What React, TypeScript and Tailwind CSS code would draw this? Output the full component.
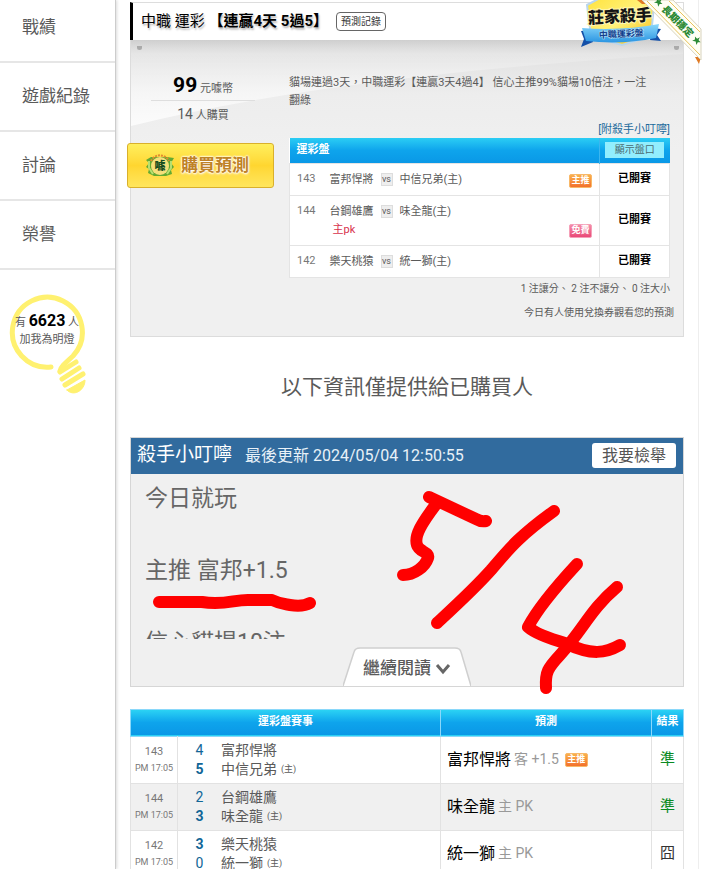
import React from "react";

type Tag = "main" | "free";

const menu = ["戰績", "遊戲紀錄", "討論", "榮譽"];

const games: { id: number; away: string; home: string; note?: string; tag?: Tag }[] = [
  { id: 143, away: "富邦悍將", home: "中信兄弟(主)", tag: "main" },
  { id: 144, away: "台鋼雄鷹", home: "味全龍(主)", note: "主pk", tag: "free" },
  { id: 142, away: "樂天桃猿", home: "統一獅(主)" },
];

const results = [
  { id: 143, away: "富邦悍將", home: "中信兄弟", a: 4, h: 5, pick: "富邦悍將", side: "客 +1.5", main: true, hit: true },
  { id: 144, away: "台鋼雄鷹", home: "味全龍", a: 2, h: 3, pick: "味全龍", side: "主 PK", main: false, hit: true },
  { id: 142, away: "樂天桃猿", home: "統一獅", a: 3, h: 0, pick: "統一獅", side: "主 PK", main: false, hit: false },
];

function PickTag({ kind }: { kind: Tag }) {
  const tone =
    kind === "main"
      ? "border-[#f8b868] bg-linear-to-b from-[#f9b04c] to-[#f2702c]"
      : "border-[#f5a0b8] bg-linear-to-b from-[#f48aa8] to-[#e94878]";
  return (
    <span
      className={`inline-flex h-[14px] w-[23px] shrink-0 items-center justify-center rounded-xs border text-[9px] leading-none font-bold text-white ${tone}`}
    >
      {kind === "main" ? "主推" : "免費"}
    </span>
  );
}

function Bulb() {
  return (
    <svg viewBox="0 0 84 104" className="absolute top-0 -left-[2px] h-[104px] w-[84px]" fill="none" stroke="#fff170" strokeLinecap="round" aria-hidden="true">
      <path d="M48 73 A35 35 0 1 1 70 62 C61 70 58 73 57 77" strokeWidth="5" />
      <path d="M57 78 L73 68" strokeWidth="5" />
      <path d="M59 85 L76 74 M62 91 L80 80" strokeWidth="5" />
      <path d="M64 96 L82 86 C82 97 70 103 64 96 Z" fill="#fff170" strokeWidth="1" />
    </svg>
  );
}

function Sidebar() {
  return (
    <aside className="w-[116px] shrink-0 border-r border-[#cccccc] bg-white shadow-[1px_0_3px_rgba(0,0,0,0.15)]">
      <nav>
        {menu.map((m) => (
          <a
            key={m}
            href="#"
            className="flex h-[69px] items-center border-b-2 border-[#e6e6e6] pl-[22px] text-[17px] first:h-[63px] first:pb-[6px]"
          >
            {m}
          </a>
        ))}
      </nav>
      <div className="relative mt-[24px] ml-[5px] h-[104px] w-[84px] pt-[18px] text-center text-[11px] leading-[17px]">
        <Bulb />
        <p className="relative whitespace-nowrap">
          有 <b className="text-[16px] font-bold text-black">6623</b> 人
        </p>
        <p className="relative">加我為明燈</p>
      </div>
    </aside>
  );
}

function Medal() {
  return (
    <svg viewBox="0 0 124 64" className="absolute -top-[2px] -right-[18px] h-[64px] w-[124px]" aria-hidden="true">
      <defs>
        <linearGradient id="gold" x1="0" y1="0" x2="1" y2="1">
          <stop offset="0" stopColor="#ffe23c" />
          <stop offset="0.5" stopColor="#fff27a" />
          <stop offset="1" stopColor="#f5b60c" />
        </linearGradient>
        <linearGradient id="ribbon" x1="0" y1="0" x2="0" y2="1">
          <stop offset="0" stopColor="#8ad8fb" />
          <stop offset="1" stopColor="#2b95e2" />
        </linearGradient>
      </defs>
      <path d="M3 31 L12 30 L15 42 L3 47 L6 39 Z M83 29 L74 28 L72 40 L83 41 L79 35 Z" fill="#1450a8" />
      <path d="M9 5 L24 -3 H58 L76 5 L73 36 L44 45 L13 36 Z" fill="url(#gold)" stroke="#b9d6ee" strokeWidth="2" />
      <path d="M4 28 Q44 31 81 24 L78 38 Q44 45 8 41 Z" fill="url(#ribbon)" />
      <g transform="rotate(-3 42 20)">
        <text x="10" y="22" fontSize="16" fontWeight="900" fill="#151515" stroke="#fff6b0" strokeWidth="2" paintOrder="stroke">莊家殺手</text>
        <text x="20" y="37" fontSize="9" fontWeight="700" fill="#143f8c" stroke="#b9e6fb" strokeWidth="1" paintOrder="stroke">中職運彩盤</text>
      </g>
      <path d="M59 0 L64 4 L73 4 L68 0 Z M117 57 L123 57 L121 64 Z" fill="#e07a24" />
      <path d="M64 0 H95 L123 29 V60 Z" fill="#fffef4" stroke="#d8d3be" strokeWidth="1" />
      <path d="M69 1 L122 55 M91 1 L122 32" stroke="#e9c25a" strokeWidth="1" />
      <g transform="translate(100 21) rotate(45)" fill="#2c8a34">
        <text x="-20" y="4" fontSize="10" fontWeight="900">長期穩定</text>
        <path d="M-27 -4 L-26 -1 L-23 -1 L-25 1 L-24 4 L-27 2 L-30 4 L-29 1 L-31 -1 L-28 -1 Z" />
        <path d="M27 -4 L28 -1 L31 -1 L29 1 L30 4 L27 2 L24 4 L25 1 L23 -1 L26 -1 Z" />
      </g>
    </svg>
  );
}

function BuyButton() {
  return (
    <button className="-ml-[4px] flex h-[45px] w-[147px] items-center gap-[6px] rounded-[3px] border border-[#d9b02c] bg-linear-to-b from-[#ffef5c] via-[#ffd630] to-[#ffe65c] pl-[17px] text-[17px] font-bold text-[#bf8226]">
      <svg viewBox="0 0 30 24" className="h-[24px] w-[30px]" aria-hidden="true">
        <path d="M6 3 L1 6 L4 9 L1 13 L4 15 L3 19 L9 22 H21 L27 20 L26 16 L29 13 L26 9 L29 4 L22 3 Z" fill="#63aa32" />
        <path d="M4 7 L4 14 L8 20 M26 7 L26 14 L22 20" stroke="#b7df70" strokeWidth="2" fill="none" />
        <circle cx="15" cy="12" r="9" fill="#f5df7a" />
        <path d="M6 7 A10 10 0 0 1 24 7" stroke="#e48a30" strokeWidth="2" strokeDasharray="2 1" fill="none" />
        <text x="15" y="16" textAnchor="middle" fontSize="11" fontWeight="900" fill="#174d20">噱</text>
      </svg>
      <span className="[text-shadow:0_0_2px_#fff,0_0_2px_#fff,0_0_2px_#fff,0_1px_3px_#fff]">購買預測</span>
    </button>
  );
}

function GamesTable() {
  return (
    <table className="w-full table-fixed border-collapse bg-white text-[11px]">
      <colgroup>
        <col className="w-[40px]" />
        <col />
        <col className="w-[70px]" />
      </colgroup>
      <thead>
        <tr className="h-[25px] bg-linear-to-b from-[#2bcdf4] via-[#0ea4ec] to-[#0a98e6] text-white">
          <th colSpan={2} className="pl-[7px] text-left font-bold">運彩盤</th>
          <th className="border-l border-[#3cb6ef] p-0">
            <button className="h-[16px] w-[59px] bg-[#92eefe] align-middle text-[10px] leading-[16px] font-normal text-[#4a6a70]">顯示盤口</button>
          </th>
        </tr>
      </thead>
      <tbody>
        {games.map((g) => (
          <tr key={g.id} className="border border-[#e4e4e4]">
            <td className="py-[7px] pl-[7px] align-top leading-[16px] text-[#777]">{g.id}</td>
            <td className="py-[7px] pr-[7px] align-top">
              <div className="flex items-end justify-between">
                <div className="leading-[17px] whitespace-nowrap">
                  <div className="flex items-center gap-[7px]">
                    {g.away}
                    <span className="flex h-[13px] w-[12px] items-center justify-center border border-[#ddd] bg-[#eee] text-[9px] leading-none">vs</span>
                    {g.home}
                  </div>
                  {g.note && <div className="pt-px pl-[3px] text-[#d8304c]">{g.note}</div>}
                </div>
                {g.tag && <PickTag kind={g.tag} />}
              </div>
            </td>
            <td className="border-l border-[#e4e4e4] text-center font-bold text-black">已開賽</td>
          </tr>
        ))}
      </tbody>
    </table>
  );
}

function Offer() {
  return (
    <section className="relative">
      <header className="flex h-[38px] items-center gap-[8px] border-t border-r border-l-3 border-t-[#ddd] border-r-[#ddd] border-l-black bg-white pl-[8px] text-black">
        <h1 className="text-[15px] font-normal whitespace-pre [text-shadow:1px_2px_2px_rgba(0,0,0,0.3)]">
          中職 運彩 <b className="font-bold">【連贏4天 5過5】</b>
        </h1>
        <button className="h-[19px] rounded-[4px] border border-[#666] px-[4px] text-[10px] leading-none text-[#333]">預測記錄</button>
      </header>
      <div className="relative flex border border-t-0 border-[#dcdcdc] bg-[#f0f0f0] pr-[13px] pb-[10px]">
        <svg viewBox="0 0 554 110" preserveAspectRatio="none" className="absolute inset-x-0 top-0 h-[110px] w-full" aria-hidden="true">
          <defs>
            <linearGradient id="shade" x1="0" y1="0" x2="0" y2="1">
              <stop offset="0" stopColor="#cfcfcf" />
              <stop offset="0.12" stopColor="#e2e2e2" />
              <stop offset="0.5" stopColor="#ededed" />
              <stop offset="1" stopColor="#f0f0f0" />
            </linearGradient>
            <linearGradient id="sheen" x1="0" y1="0" x2="0" y2="1">
              <stop offset="0" stopColor="#ffffff" stopOpacity="0" />
              <stop offset="1" stopColor="#ffffff" stopOpacity="0.8" />
            </linearGradient>
          </defs>
          <rect width="554" height="110" fill="url(#shade)" />
          <path d="M0 0 H554 V14 Q200 36 0 86 Z" fill="url(#sheen)" />
        </svg>
        <i className="absolute top-[6px] left-[6px] h-[4px] w-[5px] rounded-b-full bg-[#aaa]" />
        <i className="absolute top-[6px] right-[4px] h-[4px] w-[5px] rounded-b-full bg-[#aaa]" />
        <div className="relative w-[158px] shrink-0 pt-[30px]">
          <div className="mr-[34px] ml-[20px] text-center">
            <p className="h-[31px] border-b border-[#dedede] text-[11px] leading-[31px]">
              <b className="text-[21px] font-bold text-black">99</b> 元噱幣
            </p>
            <p className="text-[11px] leading-[27px]">
              <span className="text-[14px]">14</span> 人購買
            </p>
          </div>
          <div className="mt-[14px]">
            <BuyButton />
          </div>
        </div>
        <div className="relative min-w-0 flex-1 pt-[34px]">
          <p className="h-[48px] pr-[20px] text-[11px] leading-[18px]">
            貓場連過3天，中職運彩【連贏3天4過4】 信心主推99%貓場10倍注，一注翻綠
          </p>
          <p className="text-right text-[11px] leading-[16px]">
            <a href="#" className="text-[#1c6a9c]">[附殺手小叮嚀]</a>
          </p>
          <GamesTable />
          <p className="text-right text-[10px] leading-[22px]">1 注讓分、 2 注不讓分、 0 注大小</p>
          <p className="-mr-[4px] text-right text-[10px] leading-[26px]">今日有人使用兌換券觀看您的預測</p>
        </div>
      </div>
      <Medal />
    </section>
  );
}

function Scribble() {
  return (
    <svg viewBox="0 0 554 260" className="pointer-events-none absolute -top-[2px] -left-px h-[260px] w-[554px]" fill="none" stroke="#ff0000" strokeWidth="12" strokeLinecap="round" strokeLinejoin="round" aria-hidden="true">
      <path d="M29 166 H72 C95 170 105 163 120 164 H142 C150 168 154 168 160 169 Q173 171 180 167" />
      <path d="M299 61 L346 83 Q351 86 356 85" />
      <path d="M307 67 C291 88 284 100 287 109 C289 116 300 116 298 122 C295 131 284 139 273 139" />
      <path d="M424 75 C388 101 378 114 361 134 C345 152 334 162 307 187" />
      <path d="M447 128 Q410 168 398 191 Q407 199 435 207 C462 220 476 217 490 209" />
      <path d="M487 151 C460 174 455 191 430 219 C418 232 415 236 416 252" />
    </svg>
  );
}

function Note() {
  return (
    <section className="relative border border-[#d6d6d6] bg-[#f0f0f0]">
      <header className="flex h-[36px] items-center bg-[#316b9e] pr-[7px] pl-[6px] text-[#e8f1f8]">
        <h2 className="text-[19px] text-white">殺手小叮嚀</h2>
        <time className="ml-[13px] text-[16px]">最後更新 2024/05/04 12:50:55</time>
        <button className="ml-auto h-[25px] rounded-[3px] bg-white px-[10px] text-[16px] leading-none text-[#555]">我要檢舉</button>
      </header>
      <div className="h-[165px] overflow-hidden pt-[7px] pl-[14px] text-[23px] leading-[36px] text-[#666]">
        <p>今日就玩</p>
        <br />
        <p>主推 富邦+1.5</p>
        <br />
        <p>信心貓場10注</p>
      </div>
      <div className="flex justify-center pt-[8px]">
        <button className="relative flex h-[39px] w-[128px] items-center justify-center gap-[4px] pt-[6px] text-[17px] font-medium">
          <svg viewBox="0 0 128 39" className="absolute inset-0 h-full w-full" aria-hidden="true">
            <path d="M0 39 L11 5 Q12 1 17 1 H112 Q117 1 118 5 L128 39" fill="#fff" stroke="#cfcfcf" strokeWidth="1.5" />
          </svg>
          <span className="relative">繼續閱讀</span>
          <svg viewBox="0 0 16 12" className="relative h-[12px] w-[16px]" fill="none" stroke="#666" strokeWidth="3" aria-hidden="true">
            <path d="M2 2 L8 9 L14 2" />
          </svg>
        </button>
      </div>
      <Scribble />
    </section>
  );
}

function Results() {
  return (
    <table className="w-full table-fixed border-collapse">
      <colgroup>
        <col className="w-[47px]" />
        <col />
        <col className="w-[211px]" />
        <col className="w-[32px]" />
      </colgroup>
      <thead>
        <tr className="h-[27px] border border-[#8ad8fa] bg-linear-to-b from-[#2bd2f4] via-[#0ea4ec] to-[#0a98e6] text-[11px] text-white">
          <th colSpan={2}>運彩盤賽事</th>
          <th className="border-x border-[#8ad8fa]">預測</th>
          <th className="p-0">結果</th>
        </tr>
      </thead>
      <tbody>
        {results.map((r) => (
          <tr key={r.id} className="h-[47px] border border-[#e2e2e2] even:bg-[#f0f0f0]">
            <td className="border-r border-[#e2e2e2] p-0 text-center text-[9px] leading-[17px] whitespace-nowrap text-[#777]">
              <div className="text-[11px]">{r.id}</div>
              <div>PM 17:05</div>
            </td>
            <td className="p-0 text-[14px] leading-[19px]">
              {[
                { name: r.away, score: r.a, win: r.a > r.h, home: false },
                { name: r.home, score: r.h, win: r.h > r.a, home: true },
              ].map((t) => (
                <div key={t.name} className="flex items-center">
                  <span className={`w-[43px] text-center text-[#116697] ${t.win ? "font-bold" : ""}`}>{t.score}</span>
                  <span>{t.name}</span>
                  {t.home && <span className="ml-[4px] text-[9px]">(主)</span>}
                </div>
              ))}
            </td>
            <td className="border-x border-[#e2e2e2] py-0 pl-[6px] text-[14px] text-[#999]">
              <div className="flex items-center">
                <span className="mr-[3px] text-[16px] text-black">{r.pick}</span>
                <span className="mr-[6px]">{r.side}</span>
                {r.main && <PickTag kind="main" />}
              </div>
            </td>
            <td className={`p-0 text-center text-[15px] ${r.hit ? "text-[#0a8a22]" : "text-[#333]"}`}>{r.hit ? "準" : "囧"}</td>
          </tr>
        ))}
      </tbody>
    </table>
  );
}

export default function App() {
  return (
    <div
      lang="zh-Hant"
      className="flex h-screen overflow-hidden bg-white font-[Roboto,'Noto_Sans_CJK_TC',sans-serif] text-[#5a5a5a]"
    >
      <Sidebar />
      <main className="mr-[21px] min-w-0 flex-1 border-r border-[#eeeeee] pt-[2px] pr-[14px] pl-[14px]">
        <Offer />
        <p className="py-[34px] text-center text-[21px] leading-[32px]">以下資訊僅提供給已購買人</p>
        <Note />
        <div className="mt-[22px]">
          <Results />
        </div>
      </main>
    </div>
  );
}
